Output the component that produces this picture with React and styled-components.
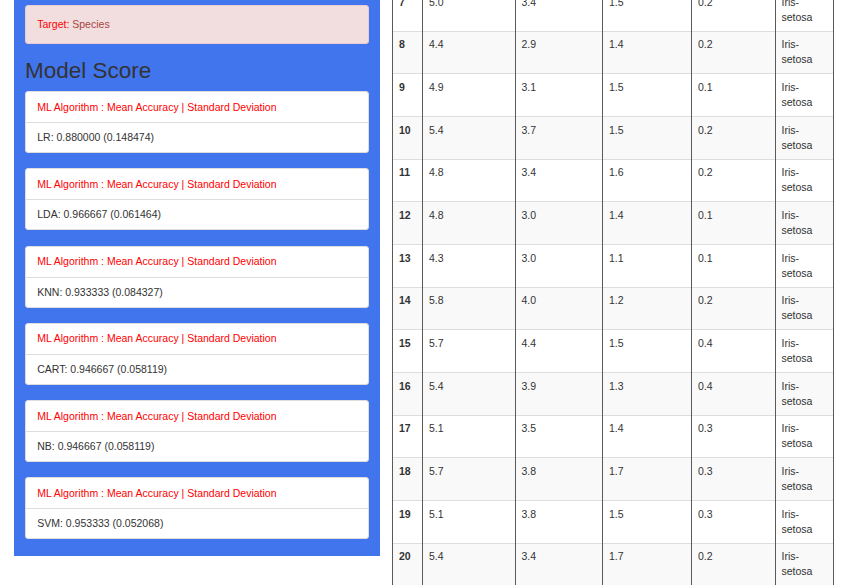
import React from 'react';
import styled, { createGlobalStyle } from 'styled-components';

const GlobalStyle = createGlobalStyle`
  html, body {
    margin: 0;
    padding: 0;
    height: 585px;
    overflow: hidden;
    background: #fff;
  }
  body {
    font-family: "Liberation Sans", Arial, sans-serif;
    font-size: 10.5px;
    line-height: 15px;
    color: #333;
  }
  * { box-sizing: border-box; }
`;

const Page = styled.div`
  display: flex;
  align-items: flex-start;
  gap: 12px;
  padding-left: 14px;
  height: 585px;
  overflow: hidden;
`;

const Sidebar = styled.div`
  width: 366px;
  flex: none;
  background: #4175ee;
  padding: 5px 11px 17px;
`;

const Alert = styled.div`
  background: #f2dede;
  border: 1px solid #ebccd1;
  border-radius: 3px;
  padding: 11px 11.25px;
  color: #a94442;
  margin-bottom: 15px;
`;

const Label = styled.span`
  color: #f00;
`;

const Title = styled.h2`
  margin: 0 0 7.5px;
  font-size: 22.5px;
  font-weight: 500;
  line-height: 24.75px;
  color: #333;
`;

const Panel = styled.div`
  background: #fff;
  border: 1px solid #ddd;
  border-radius: 3px;
  margin-bottom: 15.2px;
  &:last-child { margin-bottom: 0; }
`;

const PanelHeading = styled.div`
  padding: 7.5px 11.25px;
  color: #f00;
  border-bottom: 1px solid #ddd;
`;

const PanelBody = styled.div`
  padding: 7px 11.25px;
  color: #333;
`;

const TableScroll = styled.div`
  width: 443px;
  flex: none;
  overflow: hidden;
`;

const Table = styled.table`
  width: 441px;
  table-layout: fixed;
  border-collapse: collapse;
  margin-top: -12px;
`;

const Row = styled.tr`
  background: ${p => (p.$striped ? '#f9f9f9' : '#fff')};
  border-top: 1px solid #ddd;
`;

const Cell = styled.td`
  padding: 5.83px 6px;
  vertical-align: top;
  border-left: 1px solid #5a5a5a;
  border-right: 1px solid #5a5a5a;
  font-weight: ${p => (p.$bold ? 700 : 400)};
  word-wrap: break-word;
`;

const scores = [
  ['LR', '0.880000', '0.148474'],
  ['LDA', '0.966667', '0.061464'],
  ['KNN', '0.933333', '0.084327'],
  ['CART', '0.946667', '0.058119'],
  ['NB', '0.946667', '0.058119'],
  ['SVM', '0.953333', '0.052068'],
];

const rows = [
  [7, '5.0', '3.4', '1.5', '0.2'],
  [8, '4.4', '2.9', '1.4', '0.2'],
  [9, '4.9', '3.1', '1.5', '0.1'],
  [10, '5.4', '3.7', '1.5', '0.2'],
  [11, '4.8', '3.4', '1.6', '0.2'],
  [12, '4.8', '3.0', '1.4', '0.1'],
  [13, '4.3', '3.0', '1.1', '0.1'],
  [14, '5.8', '4.0', '1.2', '0.2'],
  [15, '5.7', '4.4', '1.5', '0.4'],
  [16, '5.4', '3.9', '1.3', '0.4'],
  [17, '5.1', '3.5', '1.4', '0.3'],
  [18, '5.7', '3.8', '1.7', '0.3'],
  [19, '5.1', '3.8', '1.5', '0.3'],
  [20, '5.4', '3.4', '1.7', '0.2'],
];

const widths = [30, 92.5, 87.5, 89, 83.5, 58.5];

export default function App() {
  return (
    <>
      <GlobalStyle />
      <Page>
        <Sidebar>
          <Alert>
            <Label>Target:</Label> Species
          </Alert>
          <Title>Model Score</Title>
          {scores.map(([name, mean, std]) => (
            <Panel key={name}>
              <PanelHeading>ML Algorithm : Mean Accuracy | Standard Deviation</PanelHeading>
              <PanelBody>
                {name}: {mean} ({std})
              </PanelBody>
            </Panel>
          ))}
        </Sidebar>
        <TableScroll>
          <Table>
            <colgroup>
              {widths.map((w, i) => (
                <col key={i} style={{ width: w }} />
              ))}
            </colgroup>
            <tbody>
              {rows.map(([idx, a, b, c, d]) => (
                <Row key={idx} $striped={idx % 2 === 0}>
                  <Cell $bold>{idx}</Cell>
                  <Cell>{a}</Cell>
                  <Cell>{b}</Cell>
                  <Cell>{c}</Cell>
                  <Cell>{d}</Cell>
                  <Cell>Iris-setosa</Cell>
                </Row>
              ))}
            </tbody>
          </Table>
        </TableScroll>
      </Page>
    </>
  );
}
